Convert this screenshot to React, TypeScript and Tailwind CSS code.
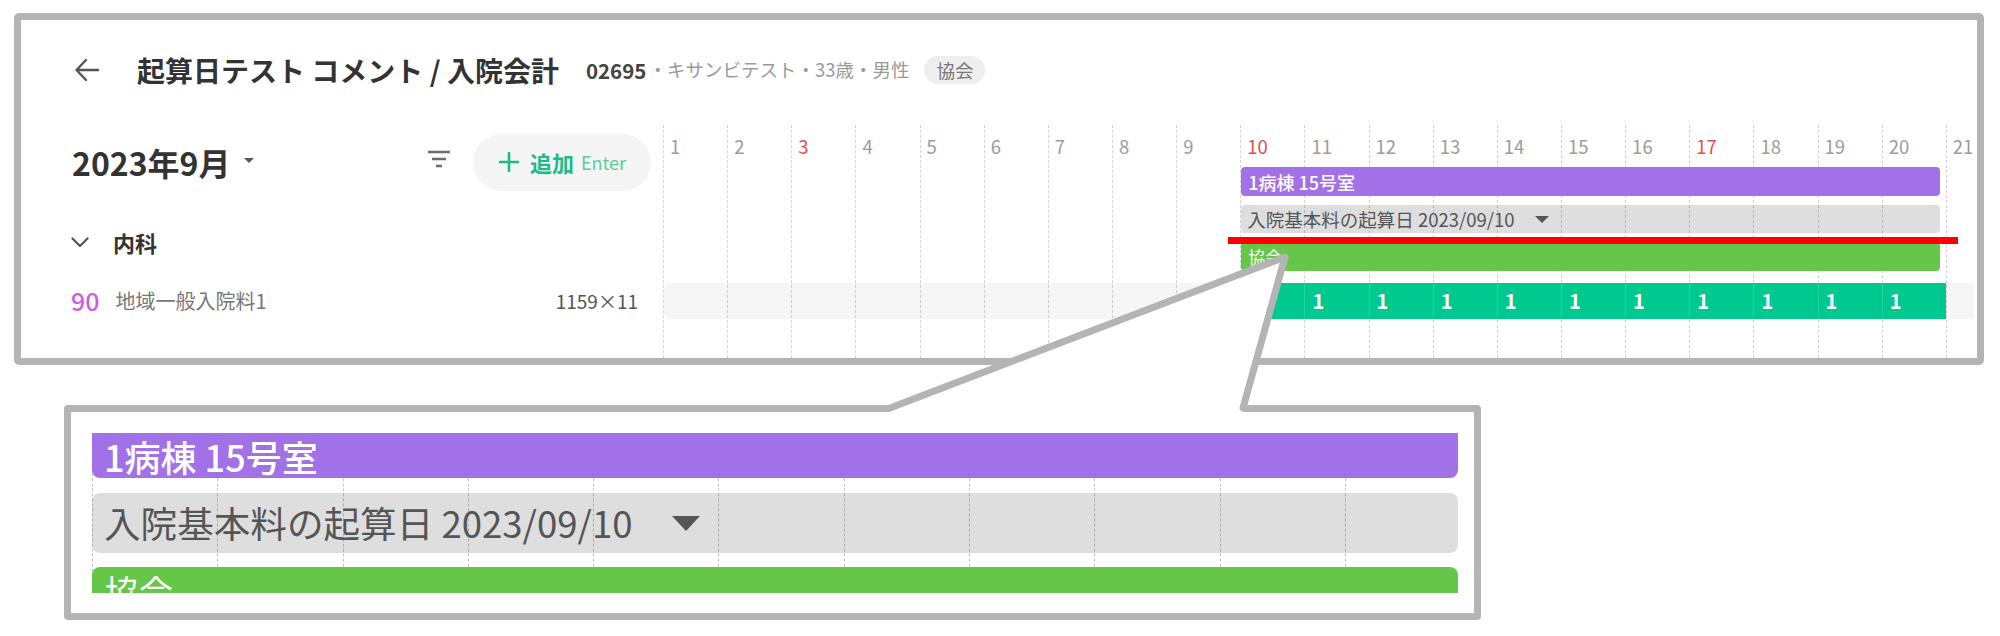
import React from "react";

const DAYS = Array.from({ length: 21 }, (_, i) => i + 1);
const SUNDAYS = new Set([3, 10, 17]);
const STAY = Array.from({ length: 11 }, (_, i) => i + 10);
const ZOOM_COLS = Array.from({ length: 11 }, (_, i) => i);

function BackArrow() {
  return (
    <svg width="26" height="26" viewBox="0 0 26 26" fill="none" stroke="#555" strokeWidth="2.4" strokeLinecap="round" strokeLinejoin="round">
      <path d="M24 13H2.5M12 3 2.5 13 12 23" />
    </svg>
  );
}

function FilterIcon() {
  return (
    <svg width="22" height="18" viewBox="0 0 22 18" fill="none" stroke="#6b6b6b" strokeWidth="2.4">
      <path d="M0 2h22M4 9h14M8 16h6" />
    </svg>
  );
}

function Caret({ w, h, color }: { w: number; h: number; color: string }) {
  return (
    <svg width={w} height={h} viewBox={`0 0 ${w} ${h}`}>
      <polygon points={`0,0 ${w},0 ${w / 2},${h}`} fill={color} />
    </svg>
  );
}

function ChevronDown() {
  return (
    <svg width="18" height="11" viewBox="0 0 18 11" fill="none" stroke="#555" strokeWidth="2.2" strokeLinecap="round" strokeLinejoin="round">
      <path d="M1.5 1.5 9 9l7.5-7.5" />
    </svg>
  );
}

function Plus() {
  return (
    <svg width="20" height="20" viewBox="0 0 20 20" fill="none" stroke="#1dbb85" strokeWidth="2.6" strokeLinecap="round">
      <path d="M10 1v18M1 10h18" />
    </svg>
  );
}

function Gantt() {
  return (
    <div className="mt-[5px] h-[233px] w-[1314px] overflow-hidden">
      <div className="grid h-full grid-cols-[repeat(20,64.15px)_31px] grid-rows-[42px_29px_9px_28px_9px_29px_12px_36px_1fr]">
        {/* day columns with dashed separators */}
        <div className="col-[1/-1] row-[1/-1] flex">
          {DAYS.map((d) => (
            <div
              key={d}
              className={`h-full shrink-0 border-l border-dashed border-[#d2d2d2] ${d === 21 ? "w-[31px]" : "w-[64.15px]"}`}
            >
              <div className={`pl-[6px] pt-[6px] text-[18.5px] leading-[30px] ${SUNDAYS.has(d) ? "text-[#e2504a]" : "text-[#9c9c9c]"}`}>
                {d}
              </div>
            </div>
          ))}
        </div>

        <div className="col-[10/21] row-[2] ml-px mr-[6px] flex items-center rounded-[4px] bg-[#a271e8] pl-[7px] text-[18px] leading-none font-medium text-white">
          1病棟 15号室
        </div>

        <div className="col-[10/21] row-[4] ml-px mr-[6px] flex items-center rounded-[4px] bg-black/[0.13] pl-[6px] text-[18.5px] leading-none text-[#555]">
          <span>入院基本料の起算日 2023/09/10</span>
          <span className="ml-[20px]">
            <Caret w={14} h={7} color="#555" />
          </span>
        </div>

        <div className="col-[10/21] row-[6] ml-px mr-[6px] flex items-center rounded-[4px] bg-[#66c64a] pl-[7px] text-[17px] leading-none text-white">
          協会
        </div>

        <div className="col-[1/-1] row-[8] ml-px mr-[3px] rounded-l-[8px] bg-black/[0.035]" />

        <div className="col-[10/21] row-[8] flex bg-[#00c98f]">
          {STAY.map((d, i) => (
            <div
              key={d}
              className={`flex w-[64.15px] shrink-0 items-center pl-[7px] text-[20px] font-bold text-white ${i > 0 ? "border-l border-white/15" : ""}`}
            >
              1
            </div>
          ))}
        </div>
      </div>
    </div>
  );
}

function ZoomedBars() {
  return (
    <div className="ml-[64px] mt-[40px] h-[215px] w-[1417px] rounded-[4px] border-[7px] border-[#b4b4b4] bg-white">
      <div className="ml-[21px] mt-[21px] h-[160px] w-[1382px] overflow-hidden">
        <div className="grid grid-cols-[repeat(11,125.3px)] grid-rows-[45px_15px_60px_14px_40px]">
          <div className="col-[1/-1] row-[1/-1] flex">
            {ZOOM_COLS.map((c) => (
              <div key={c} className="h-full w-[125.3px] shrink-0 border-l-[1.5px] border-dashed border-[#c4c4c4]" />
            ))}
          </div>

          <div className="col-[1/-1] row-[1] mr-[12px] flex items-center rounded-b-[8px] bg-[#a271e8] pl-[12px] text-[36px] leading-none font-medium text-white">
            1病棟 15号室
          </div>

          <div className="col-[1/-1] row-[3] mr-[12px] flex items-center rounded-[8px] bg-black/[0.13] pl-[12px] text-[36.6px] leading-none text-[#555]">
            <span>入院基本料の起算日 2023/09/10</span>
            <span className="ml-[40px]">
              <Caret w={28} h={15} color="#555" />
            </span>
          </div>

          <div className="col-[1/-1] row-[5] mr-[12px] rounded-t-[8px] bg-[#66c64a] pl-[13px] pt-[4px] text-[34px] leading-[1.2] text-white">
            協会
          </div>
        </div>
      </div>
    </div>
  );
}

export default function App() {
  return (
    <div className="relative h-[636px] w-[2000px] overflow-hidden bg-white font-['Noto_Sans_CJK_JP','Noto_Sans',sans-serif]">
      <div className="ml-[14px] mt-[13px] h-[352px] w-[1970px] rounded-[5px] border-[7px] border-[#b4b4b4] bg-white">
        {/* page header */}
        <div className="flex h-[100px] items-center pl-[53px]">
          <BackArrow />
          <span className="ml-[37px] text-[28px] font-bold text-[#333]">起算日テスト コメント / 入院会計</span>
          <span className="ml-[27px] text-[20.5px] font-bold text-[#444]">02695</span>
          <span className="ml-[2px] text-[18.5px] text-[#9a9a9a]">・キサンビテスト・33歳・男性</span>
          <span className="ml-[15px] rounded-full bg-[#eeeeee] px-[12px] text-[18.5px] leading-[28px] text-[#777]">協会</span>
        </div>

        <div className="flex">
          {/* left column */}
          <div className="w-[642px] shrink-0">
            <div className="flex h-[84px] items-center pl-[51px] pr-[12px]">
              <span className="text-[32px] font-semibold text-[#333]">2023年9月</span>
              <span className="ml-[14px] mt-[-4px]">
                <Caret w={10} h={5} color="#555" />
              </span>
              <span className="ml-auto mt-[-6px]">
                <FilterIcon />
              </span>
              <button className="ml-[23px] flex h-[57px] w-[178px] items-center rounded-full bg-[#f5f5f5] pl-[26px]">
                <Plus />
                <span className="ml-[11px] text-[22px] font-bold text-[#1dbb85]">追加</span>
                <span className="ml-[7px] text-[18px] text-[#55cfa1]">Enter</span>
              </button>
            </div>

            <div className="flex h-[79px] items-center pb-[3px] pl-[50px]">
              <ChevronDown />
              <span className="ml-[24px] text-[22px] font-bold text-[#333]">内科</span>
            </div>

            <div className="flex h-[36px] items-center pl-[50px] pr-[25px]">
              <span className="text-[25px] font-medium text-[#cf5fdc]">90</span>
              <span className="ml-[16px] text-[20px] text-[#777]">地域一般入院料1</span>
              <span className="ml-auto text-[19px] text-[#555]">1159×11</span>
            </div>
          </div>

          <Gantt />
        </div>
      </div>

      <ZoomedBars />

      {/* annotation marks drawn over the screenshot */}
      <svg className="pointer-events-none absolute left-0 top-0" width="2000" height="636" viewBox="0 0 2000 636">
        <rect x="1228" y="237" width="730" height="7" fill="#ff0000" />
        <polygon points="890,408 1285,257 1243,408 1243,413 890,413" fill="#ffffff" />
        <polyline
          points="890,408 1285,257 1243,408"
          fill="none"
          stroke="#b4b4b4"
          strokeWidth="7"
          strokeLinejoin="round"
          strokeLinecap="round"
        />
      </svg>
    </div>
  );
}
